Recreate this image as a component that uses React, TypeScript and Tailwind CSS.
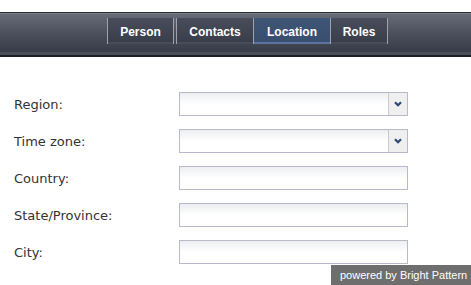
import React from 'react'

const TABS = [
  { id: 'person', label: 'Person', width: 'w-[65px]' },
  { id: 'contacts', label: 'Contacts', width: 'w-[76px]' },
  { id: 'location', label: 'Location', width: 'w-[76px]' },
  { id: 'roles', label: 'Roles', width: 'w-[56px]' },
]

const FIELDS = [
  { label: 'Region:', select: true },
  { label: 'Time zone:', select: true },
  { label: 'Country:', select: false },
  { label: 'State/Province:', select: false },
  { label: 'City:', select: false },
]

function Chevron() {
  return (
    <svg width="8" height="6" viewBox="0 0 8 6">
      <path d="M1 1.2 L4 4.2 L7 1.2" fill="none" stroke="#2c4778" strokeWidth="2.2" />
    </svg>
  )
}

function Field({ label, select }: { label: string; select: boolean }) {
  return (
    <div className="flex items-center h-[37px]">
      <label className="w-[165px] pt-[3px] text-[13px] text-[#333] font-['DejaVu_Sans',sans-serif]">
        {label}
      </label>
      <div className="w-[229px] h-[24px] flex border border-[#b9b9cc] bg-gradient-to-b from-[#eceef0] via-white to-white">
        <div className="flex-1" />
        {select && (
          <div className="w-[19px] h-full border-l border-[#c8c8d4] bg-[#efefef] flex items-center justify-center">
            <Chevron />
          </div>
        )}
      </div>
    </div>
  )
}

export default function App() {
  return (
    <div className="w-[471px] h-[285px] bg-white relative overflow-hidden">
      <div className="h-[12px]" />
      {/* Tab bar */}
      <nav className="h-[45px] border-t border-[#2a2d34] border-b-2 border-b-[#1c1e24] bg-gradient-to-b from-[#686d79] via-[#4a4f5c] to-[#353946] flex flex-col">
        <div className="h-px bg-[#7a7f89]" />
        <div className="flex pl-[107px] pt-[4px] h-[30px]">
          {TABS.map((tab, i) => {
            const active = tab.id === 'location'
            return (
              <div key={tab.id} className="flex h-full">
                <div className={`w-px h-full bg-[#9ea3ab] ${i === 1 ? 'ml-[2px]' : ''}`} />
                <div
                  className={`${tab.width} h-full pt-[3px] border-b-2 flex items-center justify-center text-[12px] font-bold text-white font-['Liberation_Sans',sans-serif] ${
                    active
                      ? 'bg-gradient-to-b from-[#3f5576] to-[#3a4f70] border-[#5a73a0]'
                      : 'bg-gradient-to-b from-[#484d5b] to-[#3a3e4b] border-transparent'
                  }`}
                >
                  {tab.label}
                </div>
                {i === 0 && <div className="w-px h-full bg-[#9ea3ab]" />}
              </div>
            )
          })}
          <div className="w-px h-full bg-[#9ea3ab]" />
        </div>
        <div className="flex-1" />
        <div className="h-[3px] bg-[#4a4e58]" />
      </nav>

      {/* Form */}
      <div className="pl-[14px] pt-[28px] flex flex-col">
        {FIELDS.map((f) => (
          <Field key={f.label} label={f.label} select={f.select} />
        ))}
      </div>

      <div className="absolute right-0 bottom-0 w-[140px] h-[20px] bg-[#6e6e6e] text-white text-[11px] font-['Liberation_Sans',sans-serif] flex items-center pl-[9px]">
        powered by Bright Pattern
      </div>
    </div>
  )
}
